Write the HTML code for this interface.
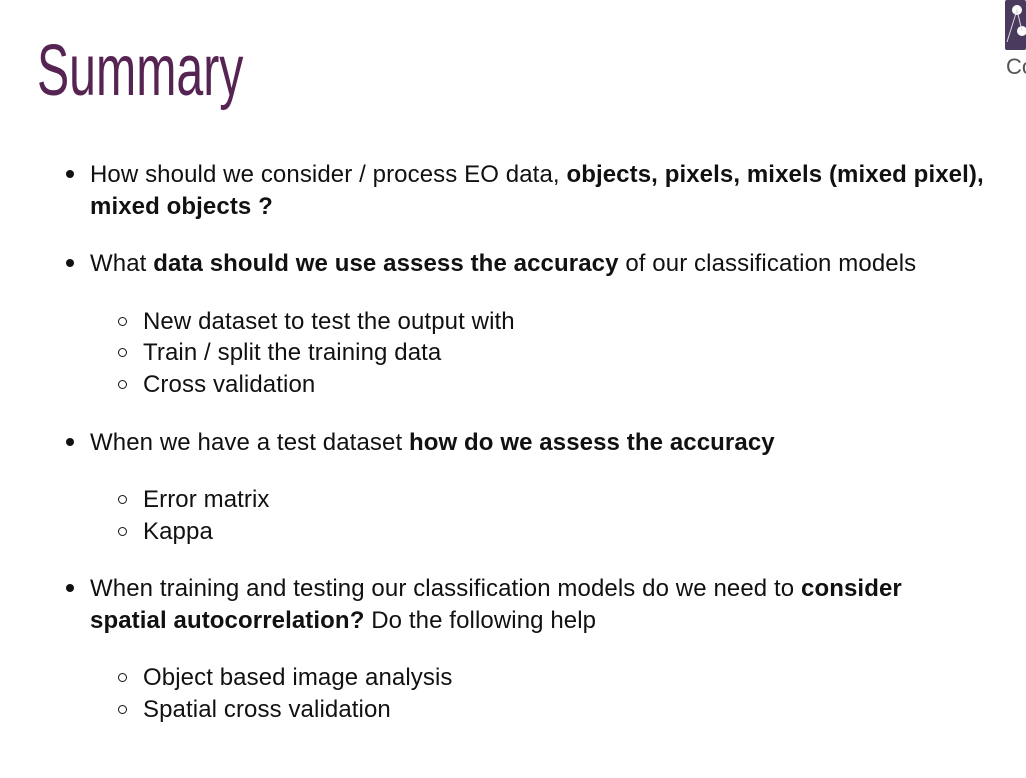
<!DOCTYPE html>
<html><head><meta charset="utf-8"><style>
body{margin:0;width:1026px;height:778px;background:#fff;overflow:hidden;position:relative;font-family:"Liberation Sans",sans-serif;color:#111;}
.t{position:absolute;left:37px;top:30px;font-family:"Liberation Sans Narrow","Liberation Sans",sans-serif;font-size:72px;color:#562452;transform:scaleX(0.67);transform-origin:left top;letter-spacing:0px;}
.l{position:absolute;font-size:24px;white-space:nowrap;line-height:32px;letter-spacing:0.1px;margin-top:2px}
.d{position:absolute;width:8px;height:8px;border-radius:50%;background:#111;margin-top:1px}
.c{position:absolute;width:9px;height:9px;border-radius:50%;border:1.6px solid #111;box-sizing:border-box;margin-top:1px}
b{font-weight:bold}
</style></head><body>
<div class="t">Summary</div>
<svg style="position:absolute;left:1005px;top:0" width="21" height="78" viewBox="0 0 21 78">
<rect x="0" y="0" width="21" height="50" rx="2" fill="#4a3a5e"/>
<circle cx="12" cy="10" r="5" fill="#fff"/><circle cx="17" cy="31" r="5" fill="#fff"/>
<path d="M2 42 L12 10 L17 31" stroke="#ddd" stroke-width="1" fill="none"/>
<text x="1" y="74" font-family="Liberation Sans" font-size="22" fill="#555">Co</text>
</svg>
<div class="d" style="left:66px;top:169px"></div>
<div class="l" style="left:90px;top:157px">How should we consider / process EO data, <b>objects, pixels, mixels (mixed pixel),</b></div>
<div class="l" style="left:90px;top:189px"><b>mixed objects ?</b></div>
<div class="d" style="left:66px;top:258px"></div>
<div class="l" style="left:90px;top:246px">What <b>data should we use assess the accuracy</b> of our classification models</div>
<div class="c" style="left:118px;top:316px"></div>
<div class="l" style="left:143px;top:304px">New dataset to test the output with</div>
<div class="c" style="left:118px;top:347px"></div>
<div class="l" style="left:143px;top:335px">Train / split the training data</div>
<div class="c" style="left:118px;top:379px"></div>
<div class="l" style="left:143px;top:367px">Cross validation</div>
<div class="d" style="left:66px;top:437px"></div>
<div class="l" style="left:90px;top:425px">When we have a test dataset <b>how do we assess the accuracy</b></div>
<div class="c" style="left:118px;top:494px"></div>
<div class="l" style="left:143px;top:482px">Error matrix</div>
<div class="c" style="left:118px;top:526px"></div>
<div class="l" style="left:143px;top:514px">Kappa</div>
<div class="d" style="left:66px;top:583px"></div>
<div class="l" style="left:90px;top:571px">When training and testing our classification models do we need to <b>consider</b></div>
<div class="l" style="left:90px;top:603px"><b>spatial autocorrelation?</b> Do the following help</div>
<div class="c" style="left:118px;top:672px"></div>
<div class="l" style="left:143px;top:660px">Object based image analysis</div>
<div class="c" style="left:118px;top:704px"></div>
<div class="l" style="left:143px;top:692px">Spatial cross validation</div>
</body></html>
